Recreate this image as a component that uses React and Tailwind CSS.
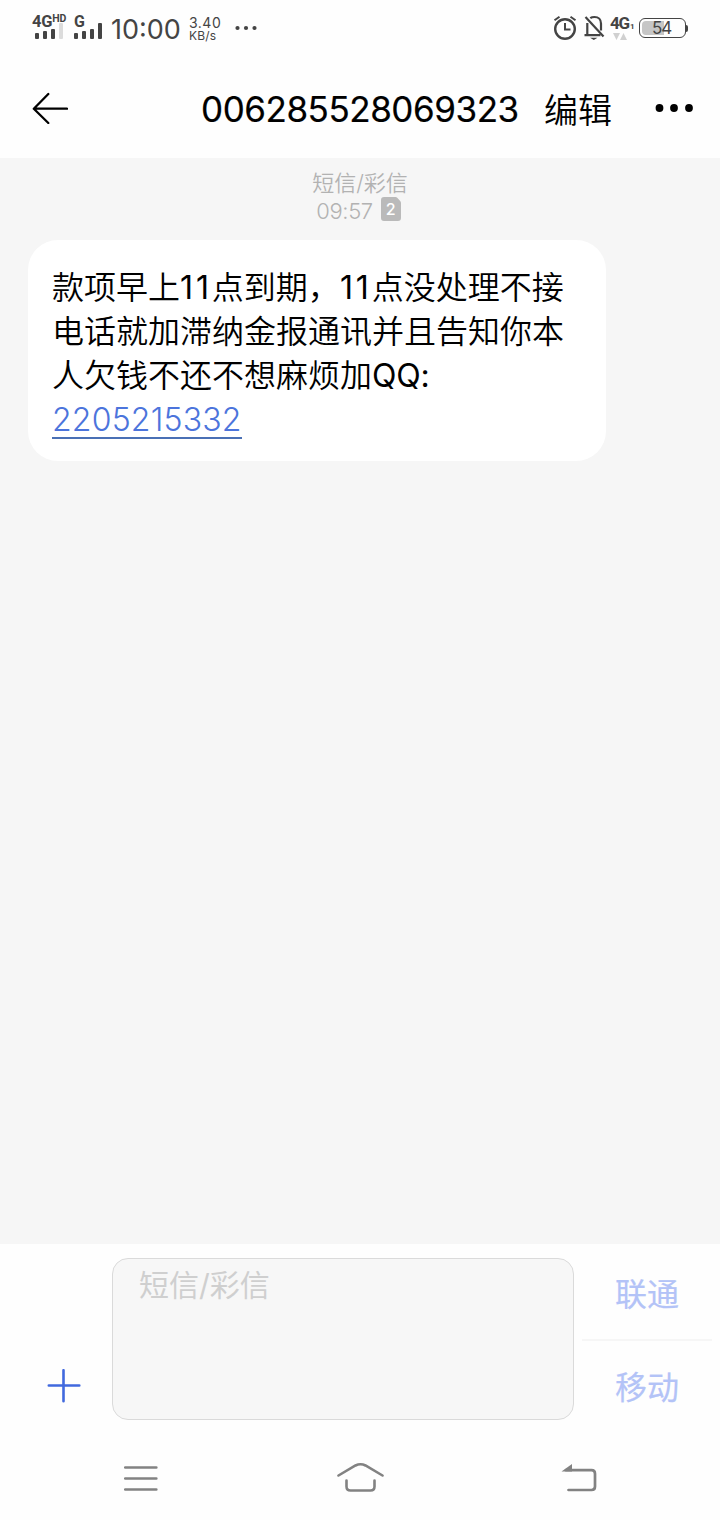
function SignalBars({ lastClass }) {
  return (
    <svg className="block h-[17px] w-7" viewBox="0 0 28 17" fill="#444">
      <rect x="0" y="11" width="4" height="6" rx="1" />
      <rect x="8" y="9" width="4" height="8" rx="1" />
      <rect x="16" y="7" width="4" height="10" rx="1" />
      <rect x="24" y="1" width="4" height="16" rx="1" className={lastClass} />
    </svg>
  );
}

function StatusBar() {
  return (
    <div className="flex h-[60px] items-start pl-[31px] pr-8 text-[#444]">
      <div className="w-[42px] pt-[14px]">
        <div className="flex h-2 items-start pl-px leading-4">
          <span className="font-['Roboto',sans-serif] text-[16.500px] font-bold tracking-[-0.2px]">4G</span>
          <span className="font-['Roboto',sans-serif] text-[10.500px] font-bold leading-[9px] tracking-[-0.2px]">HD</span>
        </div>
        <div className="pl-1">
          <SignalBars lastClass="fill-[#dcdcdc]" />
        </div>
      </div>
      <div className="w-[38px] pt-[14px]">
        <div className="h-2 pl-px font-['Roboto',sans-serif] text-[16px] font-bold leading-4">G</div>
        <div className="pl-px">
          <SignalBars lastClass="fill-[#444]" />
        </div>
      </div>
      <span className="w-[78px] whitespace-nowrap pt-[15px] text-[27px] leading-[30px]">10:00</span>
      <div className="flex w-[46px] flex-col whitespace-nowrap pt-4 leading-[13px]">
        <span className="text-[14px] tracking-[0.5px]">3.40</span>
        <span className="text-[12px] tracking-[0.2px]">KB/s</span>
      </div>
      <svg className="mt-[25px] h-[6px] w-6" viewBox="0 0 24 6" fill="#444">
        <circle cx="2.5" cy="3" r="2.1" />
        <circle cx="11" cy="3" r="2.1" />
        <circle cx="19.5" cy="3" r="2.1" />
      </svg>
      <div className="flex-1" />
      <svg className="mt-[15px] h-[26px] w-6" viewBox="0 0 24 26" fill="none" stroke="#444" strokeWidth="2.4">
        <circle cx="12" cy="14" r="9.8" />
        <path d="M12 8v6.400h5.500" strokeWidth="2" />
        <path d="M1.500 5.200l5-3.500M22.500 5.200l-5-3.500" strokeWidth="2" />
      </svg>
      <svg className="ml-[6px] mt-[15px] h-[26px] w-6" viewBox="0 0 24 26" fill="none" stroke="#444" strokeWidth="2.200">
        <path d="M4.300 20V8M7.300 3.200C8.500 2.200 10 2 11.500 2C15.500 2 18 4.800 18 8.500v7M1.500 20.200h16" />
        <path d="M2.500 2l18 19.500" />
        <path d="M7 22.700h7.500l-3.700 2.400z" fill="#444" stroke="none" />
      </svg>
      <div className="flex w-8 flex-col pl-[3px] pt-[14px]">
        <div className="flex h-[18px] items-end">
          <span className="font-['Roboto',sans-serif] text-[17px] font-bold leading-[18px] tracking-[-1.2px]">4G</span>
          <span className="pl-px font-['Roboto',sans-serif] text-[8px] font-bold leading-[11px]">1</span>
        </div>
        <svg className="ml-[3px] mt-px h-[7px] w-[15px]" viewBox="0 0 15 7" fill="#d0d0d0">
          <path d="M0 0h7L3.500 7zM7 7h7L10.500 0z" />
        </svg>
      </div>
      <div className="mt-[18px] flex items-center">
        <div className="flex h-5 w-[47px] items-center rounded-[6px] border border-[#444] p-[2px]">
          <div className="flex h-full w-[22px] items-center rounded-l-[4px] bg-[#c6c6c6] pl-[10px]">
            <span className="text-[17px] leading-4 tracking-[-1.2px]">54</span>
          </div>
        </div>
        <div className="h-[7px] w-[2px] rounded-r-sm bg-[#444]" />
      </div>
    </div>
  );
}

function Header() {
  return (
    <div className="flex h-[98px] items-start text-black">
      <svg className="ml-8 mt-8 h-8 w-9" viewBox="0 0 36 32" fill="none" stroke="#000" strokeWidth="2.3" strokeLinecap="round" strokeLinejoin="round">
        <path d="M35 16.700H2M16.300 2L1.800 16.700 16.300 31" />
      </svg>
      <span className="ml-[133px] w-[343px] whitespace-nowrap pt-[27px] text-[35px] leading-[44px] tracking-[-0.45px] [-webkit-text-stroke:0.2px_#000]">006285528069323</span>
      <span className="w-[111px] whitespace-nowrap pt-[29px] text-[34px] font-[350] leading-[44px]">编辑</span>
      <svg className="mt-[43px] h-[10px] w-10" viewBox="0 0 40 10">
        <circle cx="4.500" cy="5" r="3.900" />
        <circle cx="19" cy="5" r="3.900" />
        <circle cx="34" cy="5" r="3.900" />
      </svg>
    </div>
  );
}

function Conversation() {
  return (
    <div className="h-[1086px] bg-[#f6f6f6]">
      <div className="flex h-[82px] flex-col items-center pt-[10px] font-[350] text-[#b2b2b2]">
        <span className="text-[22px] leading-[30px]">短信/彩信</span>
        <div className="flex h-[26px] items-center gap-2 pr-[3px]">
          <span className="text-[22px] leading-[26px] tracking-[-0.4px]">09:57</span>
          <div className="relative -top-0.5 flex h-6 w-5 items-center justify-center">
            <svg className="absolute inset-0 h-6 w-5" viewBox="0 0 20 24" fill="#bababa">
              <path d="M3 0h11.500q1 0 1.700.8l3 3.200q.8.800.8 2v15a3 3 0 0 1-3 3H3a3 3 0 0 1-3-3V3a3 3 0 0 1 3-3z" />
            </svg>
            <span className="relative text-[16px] font-medium leading-6 text-white">2</span>
          </div>
        </div>
      </div>
      <div className="ml-7 flex h-[221px] w-[578px] flex-col whitespace-nowrap rounded-[30px] bg-white px-6 pt-[26px] text-[32px] font-[350] leading-[44px] text-black">
        <span>款项早上<span className="font-normal tracking-[2.900px]">11</span>点到期，<span className="font-normal tracking-[2.900px]">11</span>点没处理不接</span>
        <span>电话就加滞纳金报通讯并且告知你本</span>
        <span>人欠钱不还不想麻烦加<span className="font-normal tracking-[-0.2px]">QQ:</span></span>
        <span className="h-[41px] self-start border-b-2 border-[#4a70b5] leading-[43px] tracking-[0.2px] text-[#4c74dc]">2205215332</span>
      </div>
    </div>
  );
}

function Composer() {
  return (
    <div className="flex h-[190px] items-start pt-[14px]">
      <svg className="ml-[47px] mt-[111px] h-[34px] w-[34px]" viewBox="0 0 34 34" fill="none" stroke="#4169de" strokeWidth="2.600" strokeLinecap="round">
        <path d="M1.800 16.500h30.500M16.500 1.200v31" />
      </svg>
      <div className="ml-[31px] h-[162px] w-[462px] rounded-[16px] border border-[#dadada] bg-[#f7f7f7] pl-[26px] pt-1 text-[30px] leading-[44px] text-[#cfcfcf]">短信/彩信</div>
      <div className="ml-2 flex w-[130px] flex-col items-center text-[32px] leading-[44px] text-[#b3c3f7] [-webkit-text-stroke:0.2px_#b3c3f7]">
        <span className="h-[81px] pt-[15px]">联通</span>
        <div className="h-[2px] w-full bg-[#f6f6f6]" />
        <span className="pt-[25px]">移动</span>
      </div>
    </div>
  );
}

function NavBar() {
  return (
    <div className="flex h-[86px] items-start">
      <svg className="ml-[123px] mt-[30px] h-7 w-[35px]" viewBox="0 0 35 28" fill="none" stroke="#828282" strokeWidth="2.700" strokeLinecap="round">
        <path d="M2.300 3.500h31M2.300 14.500h31M2.300 25.500h31" />
      </svg>
      <svg className="ml-[178px] mt-7 h-[32px] w-[50px]" viewBox="0 0 50 32" fill="none" stroke="#828282" strokeWidth="2.600" strokeLinecap="round">
        <path d="M2.500 13.500L19.500 3.500Q24.500 1 29.500 3.500L46.500 13.500M10.500 18.500v6q0 4 4 4h20q4 0 4-4v-6" />
      </svg>
      <svg className="ml-[175px] mt-[29px] h-[30px] w-[38px]" viewBox="0 0 38 30" fill="none" stroke="#828282" strokeWidth="2.700" strokeLinecap="round">
        <path d="M5 7.200H30.500q3.500 0 3.500 3.500v12.800q0 3.500-3.500 3.500H7.500" />
        <path d="M.5 8.500L11 1v7.500z" fill="#828282" stroke="none" />
      </svg>
    </div>
  );
}

export default function App() {
  return (
    <div className="h-[1520px] w-[720px] overflow-hidden bg-[#fefefe] font-['Inter','Noto_Sans_CJK_SC',sans-serif]">
      <StatusBar />
      <Header />
      <Conversation />
      <Composer />
      <NavBar />
    </div>
  );
}
